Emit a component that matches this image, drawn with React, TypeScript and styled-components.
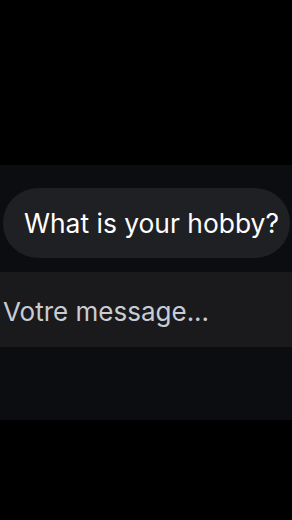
import React from "react";
import styled, { createGlobalStyle } from "styled-components";

const Global = createGlobalStyle`
  html, body { margin: 0; padding: 0; background: #000; }
  body { font-family: Inter, "Noto Sans", sans-serif; -webkit-font-smoothing: antialiased; }
`;

const Screen = styled.div`
  width: 292px;
  height: 520px;
  background: #000;
  display: flex;
  flex-direction: column;
  padding-top: 165px;
  box-sizing: border-box;
`;

const ChatPanel = styled.section`
  height: 255px;
  background: #0c0d10;
  display: flex;
  flex-direction: column;
  padding-top: 23px;
  box-sizing: border-box;
  gap: 14px;
`;

const Bubble = styled.div`
  margin-left: 3px;
  width: 287px;
  height: 70px;
  border-radius: 35px;
  background: #1f2024;
  display: flex;
  align-items: center;
  padding-left: 21px;
  box-sizing: border-box;
  color: #ffffff;
  font-size: 26.4px;
  white-space: nowrap;
`;

const InputBar = styled.div`
  height: 75px;
  background: #1a1a1c;
  display: flex;
  align-items: center;
  padding: 3px 0 0 3px;
  box-sizing: border-box;
`;

const Placeholder = styled.span`
  color: #c8ccd3;
  font-size: 26px;
  white-space: nowrap;
`;

export default function App() {
  return (
    <>
      <Global />
      <Screen>
        <ChatPanel>
          <Bubble>What is your hobby?</Bubble>
          <InputBar>
            <Placeholder>Votre message...</Placeholder>
          </InputBar>
        </ChatPanel>
      </Screen>
    </>
  );
}
